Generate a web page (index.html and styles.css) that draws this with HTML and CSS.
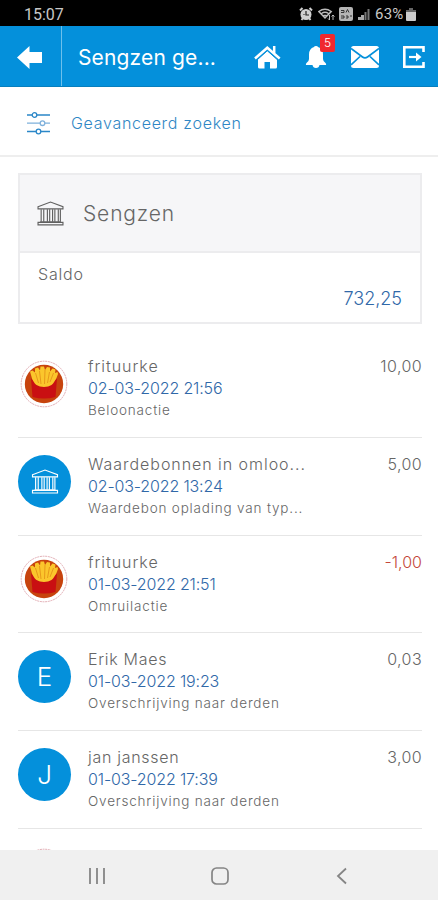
FILE: index.html
```html
<!DOCTYPE html>
<html lang="nl">
<head>
<meta charset="utf-8">
<meta name="viewport" content="width=device-width, initial-scale=1">
<title>Sengzen</title>
<link rel="stylesheet" href="styles.css">
</head>
<body>
<svg class="defs" aria-hidden="true">
  <symbol id="bank" viewBox="0 0 26 24">
    <path d="M1 5.500 13 1l12 4.500v2H1zM3 7.500h20M3 20h20M1 20.500h24V23H1z"/>
    <path d="M4 8v12M6.500 8v12M10 8v12M12.200 8v12M15 8v12M17.200 8v12M20.500 8v12M22.500 8v12"/>
  </symbol>
  <symbol id="fries" viewBox="0 0 48 48">
    <circle cx="24" cy="24" r="22.800" fill="#fff" stroke="#dea3aa" stroke-width=".9" stroke-dasharray="2 .7"/>
    <circle cx="24" cy="24" r="19.200" fill="#c7430d"/>
    <path d="M13 22 10 11.500l2.500-1 2.500 2V8.500l3-1 2 3 .5-4h3.500l1 3.500L27 7l3 .5v4l2.500-3 3 1-.5 3.500 2.500-1L38 14l-3 8-4 6H17z" fill="#fbc62c"/>
    <path d="m15.500 13 3 10m1-12 1.500 13m4-14-.5 14m5-12-2 11m6-10-3.500 9" stroke="#e8991a" stroke-width="1" fill="none"/>
    <path d="M11 18.500c2 1 3 5 5.500 6.500 4 2.500 11 2.500 15 0 2.500-1.500 3.500-5.500 5.500-6.500L35.500 37Q24 40 12.500 37z" fill="#c90f12"/>
  </symbol>
</svg>
<div class="phone">
  <div class="status">
    <span class="clock">15:07</span>
    <div class="indicators">
      <svg width="14" height="14" viewBox="0 0 14 14"><circle cx="7" cy="7.500" r="5.500" fill="#d0d0d0"/><path d="M1 3.500 3.500 1M13 3.500 10.500 1M2.500 13l1.500-2M11.500 13 10 11" stroke="#d0d0d0" stroke-width="2"/><path d="M7 4v4h3M4.500 7.500h1" stroke="#222" stroke-width="1.200" fill="none"/></svg>
      <svg width="17" height="14" viewBox="0 0 17 14" fill="none" stroke="#bbb" stroke-width="1.500"><path d="M.8 4.500Q7 .2 13.200 4.500L7 11zM3.500 6.500Q7 4 10.500 6.500M5.500 8.500h3"/><path d="M11.500 8v5m-1.500-1.500 1.500 1.500M15 13V8m-1.500 1.500L15 8l1.500 1.500" stroke-width="1"/></svg>
      <svg width="14" height="14" viewBox="0 0 14 14"><rect width="14" height="14" rx="2" fill="#b5b5b5"/><path d="M2 3.500h3v2H2m5 0 1.500-3 1.500 3M2 9h3v2H2m5-2h2v2H7m4-2h2" stroke="#333" fill="none"/></svg>
      <svg width="12" height="13" viewBox="0 0 12 13"><path d="M0 12V9h3v3zM3 12V7h3v5z" fill="#aaa"/><path d="M6.500 12V4h2v8zM9.500 12V1h2v11z" fill="#777"/></svg>
      <span class="percent">63%</span>
      <svg width="10" height="13" viewBox="0 0 10 13"><path d="M3 0h4v2h3v2H0V2h3z" fill="#666"/><path d="M0 4h10v8q0 1-1 1H1q-1 0-1-1z" fill="#ccc"/></svg>
    </div>
  </div>

  <header class="topbar">
    <button class="back" aria-label="Terug"><svg width="25" height="23" viewBox="0 0 25 23"><path d="M0 11.500 12.500 0v6H25v11H12.500v6z" fill="#fff"/></svg></button>
    <h1>Sengzen ge...</h1>
    <nav class="actions">
      <svg class="home" width="27" height="24" viewBox="0 0 27 24" fill="#fff"><path d="M13.300 6 4 14.300V22q0 1.500 1.500 1.500h5V17h5.500v6.500h5.500q1.500 0 1.500-1.500v-7.700z"/><path d="M1 13.500 13.300 2.700l12.400 10.800M20.200 1v7.500" fill="none" stroke="#fff" stroke-width="2.500"/><path d="m3.500 14.500 9.800-8.800 9.800 8.800" fill="none" stroke="#0490db" stroke-width="1"/></svg>
      <div class="bell">
        <svg width="22" height="22" viewBox="0 0 22 22" fill="#fff"><path d="M11 0q1.800 0 2 1Q18 2.500 18 8.500V13q0 2.500 2.500 4 1 .8.500 2H1q-.5-1.200.5-2Q4 15.500 4 13V8.500Q4 2.500 9 1q.2-1 2-1zM7.500 19h7q-.5 3-3.500 3t-3.500-3z"/></svg>
        <span class="badge">5</span>
      </div>
      <svg class="mail" width="28" height="22" viewBox="0 0 28 22"><rect width="28" height="22" rx="2.500" fill="#fff"/><path d="m0 2.500 11.500 8.500q2.500 1.800 5 0L28 2.500M0 19l9-8.500M28 19l-9-8.500" stroke="#0490db" stroke-width="1.700" fill="none"/></svg>
      <svg class="exit" width="22" height="22" viewBox="0 0 22 22" fill="none" stroke="#fff" stroke-width="2.600"><path d="M20.500 6V1.300H1.300v19.400h19.200V16"/><path d="M6 11h9" stroke-width="2.200"/><path d="m13 6.500 5.500 4.500-5.500 4.500z" fill="#fff" stroke="none"/></svg>
    </nav>
  </header>

  <div class="search">
    <svg width="23" height="23" viewBox="0 0 23 23" fill="none" stroke="#2b87c8" stroke-width="1.300"><path d="M0 3h5m5 0h13M0 19.500h9m5 0h9"/><circle cx="7.500" cy="3" r="2.300"/><circle cx="11.500" cy="19.500" r="2.300"/><g stroke="#7fb1dc"><path d="M0 11.200h13m5 0h5"/><circle cx="15.500" cy="11.200" r="2.300"/></g></svg>
    <span class="search-label">Geavanceerd zoeken</span>
  </div>

  <main>
    <section class="account">
      <div class="account-head">
        <svg class="bank-dark" width="27" height="25"><use href="#bank"/></svg>
        <h2>Sengzen</h2>
      </div>
      <div class="account-body">
        <div class="label">Saldo</div>
        <div class="balance">732,25</div>
      </div>
    </section>

    <ul class="list">
      <li class="row">
        <div class="avatar plain"><svg width="48" height="48"><use href="#fries"/></svg></div>
        <div class="info"><div class="name wide">frituurke</div><div class="date">02-03-2022 21:56</div><div class="desc">Beloonactie</div></div>
        <div class="amount">10,00</div>
      </li>
      <li class="row">
        <div class="avatar"><svg class="bank-light" width="28" height="25"><use href="#bank"/></svg></div>
        <div class="info"><div class="name wide">Waardebonnen in omloo...</div><div class="date">02-03-2022 13:24</div><div class="desc">Waardebon oplading van typ...</div></div>
        <div class="amount">5,00</div>
      </li>
      <li class="row">
        <div class="avatar plain"><svg width="48" height="48"><use href="#fries"/></svg></div>
        <div class="info"><div class="name wide">frituurke</div><div class="date">01-03-2022 21:51</div><div class="desc">Omruilactie</div></div>
        <div class="amount negative">-1,00</div>
      </li>
      <li class="row">
        <div class="avatar">E</div>
        <div class="info"><div class="name">Erik Maes</div><div class="date">01-03-2022 19:23</div><div class="desc">Overschrijving naar derden</div></div>
        <div class="amount">0,03</div>
      </li>
      <li class="row">
        <div class="avatar">J</div>
        <div class="info"><div class="name">jan janssen</div><div class="date">01-03-2022 17:39</div><div class="desc">Overschrijving naar derden</div></div>
        <div class="amount">3,00</div>
      </li>
      <li class="row">
        <div class="avatar plain"><svg width="48" height="48"><use href="#fries"/></svg></div>
      </li>
    </ul>
  </main>

  <footer class="sysnav">
    <svg width="18" height="18" viewBox="0 0 18 18" stroke="#858585" stroke-width="1.800"><path d="M2 1v16M9 1v16M16 1v16"/></svg>
    <svg width="18" height="18" viewBox="0 0 18 18" fill="none" stroke="#858585" stroke-width="1.700"><rect x="1" y="1" width="16" height="16" rx="4.500"/></svg>
    <svg width="18" height="18" viewBox="0 0 18 18" fill="none" stroke="#858585" stroke-width="1.800"><path d="M13 1.500 5 9l8 7.500"/></svg>
  </footer>
</div>
</body>
</html>
```

FILE: styles.css
```css
* { box-sizing: border-box; }
body {
  margin: 0;
  background: #fff;
  color: #666;
  font-family: Inter, "Open Sans", sans-serif;
  font-weight: 300;
}
h1, h2, ul { margin: 0; padding: 0; font-weight: 300; }
.defs { display: none; }
.phone { display: flex; flex-direction: column; width: 438px; height: 900px; overflow: hidden; }

.status {
  flex: none;
  height: 26px;
  padding: 2px 22px 0 24px;
  display: flex;
  align-items: center;
  justify-content: space-between;
  background: #000;
  color: #c8c8c8;
  font-family: Roboto, sans-serif;
  font-weight: 400;
}
.clock { font-size: 16px; letter-spacing: 0; }
.indicators { display: flex; align-items: center; gap: 4.500px; }
.percent { font-size: 15px; letter-spacing: .2px; margin: 0 -2px 0 1px; }

.topbar {
  flex: none;
  height: 61px;
  display: flex;
  align-items: center;
  background: #0490db;
  border-bottom: 1px solid #087fbd;
  color: #fff;
}
.back {
  width: 62px;
  height: 100%;
  padding: 2px 0 0 17px;
  border: 0;
  border-right: 1px solid #6dc0ec;
  background: none;
  text-align: left;
}
.back svg { display: block; }
h1 { flex: 1; padding: 2px 0 0 16px; font-size: 21px; font-weight: 400; letter-spacing: .15px; white-space: nowrap; }
.actions { display: flex; align-items: center; padding: 2px 13px 0 0; }
.actions svg { display: block; }
.bell { position: relative; margin-left: 24px; }
.badge {
  position: absolute;
  top: -12px;
  left: 15px;
  width: 15px;
  height: 18px;
  border-radius: 2px;
  background: #f0282e;
  font-size: 12px;
  line-height: 18px;
  text-align: center;
}
.mail { margin-left: 24px; }
.exit { margin-left: 24px; }

.search {
  flex: none;
  height: 70px;
  padding: 4px 0 0 27px;
  display: flex;
  align-items: center;
  gap: 21px;
  border-bottom: 2px solid #eee;
  color: #2f87c5;
}
.search-label { font-size: 16px; letter-spacing: .7px; }

main { flex: 1; min-height: 0; overflow: hidden; padding: 16px 16px 0 18px; }
.account { height: 151px; border: 2px solid #ececee; }
.account-head {
  height: 78px;
  padding: 0 0 0 17px;
  display: flex;
  align-items: center;
  gap: 19px;
  background: #f6f6f8;
  border-bottom: 2px solid #ececee;
}
h2 { font-size: 21px; letter-spacing: .85px; }
.bank-dark, .bank-light { fill: none; stroke: #606060; stroke-width: 1.1; }
.bank-light { stroke: #fff; }
.account-body { padding: 11px 18px 0; }
.label { font-size: 16px; line-height: 20px; letter-spacing: .8px; }
.balance { margin-top: 4px; text-align: right; font-size: 18px; line-height: 22px; color: #3068a8; }

.list { list-style: none; padding-top: 16px; }
.row {
  height: 97.750px;
  padding-top: 17px;
  display: flex;
  align-items: flex-start;
  border-bottom: 1.500px solid #e6e6e6;
}
.avatar {
  flex: none;
  width: 53px;
  height: 53px;
  display: flex;
  align-items: center;
  justify-content: center;
  border-radius: 50%;
  background: #0490db;
  color: #fff;
  font-size: 26px;
}
.plain { background: none; padding-right: 1px; }
.info { flex: 1; margin-left: 17px; white-space: nowrap; }
.name { font-size: 16px; line-height: 22px; letter-spacing: .7px; margin-top: -2px; }
.wide { letter-spacing: .95px; }
.date { font-size: 16px; line-height: 22px; letter-spacing: -.15px; color: #3068a8; }
.desc { font-size: 13.500px; line-height: 22px; letter-spacing: .82px; }
.amount { font-size: 16px; line-height: 22px; letter-spacing: .4px; margin: -2px 0 0; }
.negative { color: #c4473a; letter-spacing: 0; }

.sysnav {
  flex: none;
  height: 50px;
  padding: 2px 87px 0 88px;
  display: flex;
  align-items: center;
  justify-content: space-between;
  background: #f0f0f0;
}
```
